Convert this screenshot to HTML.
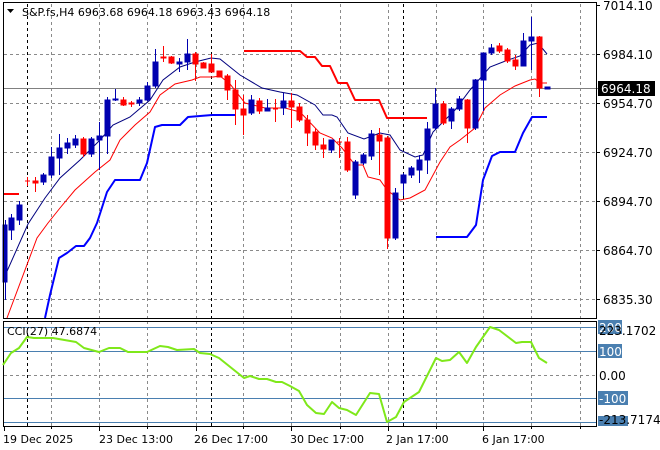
<!DOCTYPE html>
<html><head><meta charset="utf-8"><style>
html,body{margin:0;padding:0;background:#fff;width:660px;height:450px;overflow:hidden}
svg{display:block}
text{font-family:"DejaVu Sans","Liberation Sans",sans-serif;font-size:11px;fill:#000}
text.ax{font-size:12px}
</style></head><body>
<svg width="660" height="450" viewBox="0 0 660 450" xmlns="http://www.w3.org/2000/svg">
<rect width="660" height="450" fill="#fff"/>
<g stroke="#8a8a8a" stroke-width="1" stroke-dasharray="3,3" fill="none">
<path d="M4 54.5H596M4 103.5H596M4 152.5H596M4 201.5H596M4 250.5H596M4 299.5H596"/>
<path d="M51.5 4V318M99.5 4V318M147.5 4V318M196.5 4V318M243.5 4V318M291.5 4V318M340.5 4V318M388.5 4V318M436.5 4V318M483.5 4V318M531.5 4V318M580.5 4V318"/>
<path d="M51.5 321V426M99.5 321V426M147.5 321V426M196.5 321V426M243.5 321V426M291.5 321V426M340.5 321V426M388.5 321V426M436.5 321V426M483.5 321V426M531.5 321V426M580.5 321V426M4 375.5H596"/>
</g>
<g stroke="#000" stroke-width="1" stroke-dasharray="3,3" fill="none">
<path d="M27.5 4V318M211.5 4V318M403.5 4V318M27.5 321V426M211.5 321V426M403.5 321V426"/>
</g>
<path d="M4 88.5H598" stroke="#808080" stroke-width="1"/>
<g fill="none" stroke-width="2" stroke-linejoin="round">
<path d="M4 194H19" stroke="#ff0000"/>
<path d="M244 51H300L307 57H315L322 66H330L338 83H347L355 100H379L387 118H427" stroke="#ff0000"/>
<path d="M45 318L50 295L59 258L67 253L76 246H84L90 238L97 223L107 192L115 180H140L147 163L155 127L162 125H180L188 117L212 115H235" stroke="#0000ff"/>
<path d="M436 237H467L476 225L483 180L492 156L500 152H515L523 133L532 117H547" stroke="#0000ff"/>
</g>
<polyline fill="none" stroke="#00007f" stroke-width="1" points="4,278 28,224 45,198 60,178 80,160 100,140 113,125 130,117 150,100 163,80 180,67 195,62 211,58 220,59 240,75 262,88 280,92 297,95 315,105 323,115 332,115 337,117 348,133 364,139 380,133 390,135 400,150 415,157 423,155 433,132 455,110 470,90 490,67 508,60 520,56 530,45 538,43 547,54"/>
<polyline fill="none" stroke="#ff0000" stroke-width="1" points="7,318 37,238 48,223 60,208 75,190 95,172 110,160 120,140 135,125 150,112 160,95 175,84 192,80 200,77 213,77 220,76 230,84 245,103 265,108 285,108 300,112 320,133 332,138 342,148 355,165 363,165 368,177 380,180 387,190 400,200 410,198 425,190 440,162 450,147 460,140 475,128 485,108 500,95 515,86 530,80 535,79 540,83 547,83"/>
<g stroke-width="1">
<g fill="#0000b0" stroke="#0000b0">
<path d="M5.5 220V300"/><rect x="3" y="225" width="4" height="57"/>
<path d="M11.5 214V240"/><rect x="9" y="218" width="5" height="12"/>
<path d="M19.5 201V225"/><rect x="17" y="205" width="5" height="15"/>
<path d="M43.5 173V185"/><rect x="41" y="175" width="5" height="7"/>
<path d="M51.5 147V178"/><rect x="49" y="157" width="5" height="18"/>
<path d="M59.5 134V175"/><rect x="57" y="148" width="5" height="10"/>
<path d="M67.5 138V154"/><rect x="65" y="143" width="5" height="5"/>
<path d="M75.5 135V148"/><rect x="73" y="139" width="5" height="6"/>
<path d="M91.5 137V157"/><rect x="89" y="139" width="5" height="15"/>
<path d="M99.5 122V170"/><rect x="97" y="136" width="5" height="4"/>
<path d="M107.5 97V154"/><rect x="105" y="100" width="5" height="36"/>
<path d="M115.5 89V101"/><rect x="113" y="99" width="5" height="1"/>
<path d="M139.5 97V106"/><rect x="137" y="100" width="5" height="3"/>
<path d="M147.5 82V101"/><rect x="145" y="86" width="5" height="14"/>
<path d="M155.5 49V88"/><rect x="153" y="62" width="5" height="24"/>
<path d="M179.5 58V72"/><rect x="177" y="62" width="5" height="2"/>
<path d="M187.5 39V70"/><rect x="185" y="54" width="5" height="8"/>
<path d="M251.5 95V115"/><rect x="249" y="100" width="5" height="13"/>
<path d="M267.5 99V111"/><rect x="265" y="108" width="5" height="3"/>
<path d="M283.5 93V115"/><rect x="281" y="101" width="5" height="7"/>
<path d="M331.5 140V153"/><rect x="329" y="140" width="5" height="10"/>
<path d="M355.5 160V199"/><rect x="353" y="162" width="5" height="33"/>
<path d="M363.5 153V165"/><rect x="361" y="155" width="5" height="8"/>
<path d="M371.5 130V160"/><rect x="369" y="134" width="5" height="22"/>
<path d="M395.5 188V240"/><rect x="393" y="193" width="5" height="45"/>
<path d="M403.5 173V196"/><rect x="401" y="175" width="5" height="8"/>
<path d="M411.5 166V178"/><rect x="409" y="168" width="5" height="7"/>
<path d="M419.5 155V183"/><rect x="417" y="160" width="5" height="10"/>
<path d="M427.5 122V174"/><rect x="425" y="129" width="5" height="31"/>
<path d="M435.5 88V130"/><rect x="433" y="104" width="5" height="24"/>
<path d="M451.5 107V129"/><rect x="449" y="109" width="5" height="12"/>
<path d="M459.5 96V111"/><rect x="457" y="99" width="5" height="10"/>
<path d="M475.5 79V130"/><rect x="473" y="80" width="5" height="48"/>
<path d="M483.5 53V111"/><rect x="481" y="53" width="5" height="27"/>
<path d="M491.5 44V55"/><rect x="489" y="48" width="5" height="5"/>
<path d="M523.5 33V66"/><rect x="521" y="41" width="5" height="25"/>
<path d="M531.5 17V70"/><rect x="529" y="37" width="5" height="4"/>
<rect x="545" y="87" width="5" height="2"/>
</g>
<g fill="#ff0000" stroke="#ff0000">
<path d="M27.5 177V186M25 181H30"/>
<path d="M35.5 177V192"/><rect x="33" y="181" width="5" height="2"/>
<path d="M83.5 137V157"/><rect x="81" y="139" width="5" height="15"/>
<path d="M123.5 97V106"/><rect x="121" y="100" width="5" height="5"/>
<path d="M131.5 101V107"/><rect x="129" y="103" width="5" height="1"/>
<path d="M163.5 46V62"/><rect x="161" y="57" width="5" height="1"/>
<path d="M171.5 56V64"/><rect x="169" y="57" width="5" height="6"/>
<path d="M195.5 52V81"/><rect x="193" y="54" width="5" height="10"/>
<path d="M203.5 62V68"/><rect x="201" y="63" width="5" height="5"/>
<path d="M211.5 54V72"/><rect x="209" y="64" width="5" height="8"/>
<rect x="217" y="71" width="5" height="6"/>
<path d="M227.5 74V100"/><rect x="225" y="76" width="5" height="14"/>
<path d="M235.5 80V125"/><rect x="233" y="90" width="5" height="19"/>
<path d="M243.5 95V135"/><rect x="241" y="109" width="5" height="6"/>
<path d="M259.5 98V114"/><rect x="257" y="101" width="5" height="10"/>
<path d="M275.5 99V122M273 109H278"/>
<path d="M291.5 93V128"/><rect x="289" y="101" width="5" height="6"/>
<path d="M299.5 103V122"/><rect x="297" y="107" width="5" height="13"/>
<path d="M307.5 115V146"/><rect x="305" y="120" width="5" height="13"/>
<path d="M315.5 128V150"/><rect x="313" y="132" width="5" height="13"/>
<path d="M323.5 138V158"/><rect x="321" y="145" width="5" height="4"/>
<path d="M339.5 138V158M337 142H342"/>
<path d="M347.5 137V172"/><rect x="345" y="142" width="5" height="28"/>
<path d="M379.5 128V175"/><rect x="377" y="135" width="5" height="6"/>
<path d="M387.5 136V249"/><rect x="385" y="138" width="5" height="100"/>
<path d="M443.5 101V125"/><rect x="441" y="104" width="5" height="19"/>
<path d="M467.5 99V143"/><rect x="465" y="100" width="5" height="28"/>
<path d="M499.5 43V53"/><rect x="497" y="46" width="5" height="5"/>
<path d="M507.5 48V63"/><rect x="505" y="50" width="5" height="11"/>
<path d="M515.5 55V70"/><rect x="513" y="60" width="5" height="6"/>
<path d="M539.5 36V97"/><rect x="537" y="37" width="5" height="51"/>
</g>
</g>
<rect x="3.5" y="2.5" width="593" height="316" fill="none" stroke="#000"/>
<rect x="3.5" y="321.5" width="593" height="105" fill="none" stroke="#000"/>
<g stroke="#4a7fb0" stroke-width="1">
<path d="M4 327.5H596M4 351.5H596M4 398.5H596M4 422.5H596"/>
</g>
<polyline fill="none" stroke="#7fe81a" stroke-width="2" stroke-linejoin="round" points="3,365 11,353 19,348 27,337 34,338 53,338 76,342 84,348 99,352 109,348 120,348 128,352 147,352 160,346 168,347 177,350 194,349 200,353 210,354 219,358 244,378 250,376 259,379 267,379 276,382 282,382 290,386 299,391 307,405 316,413 324,414 332,402 339,408 347,410 356,415 370,393 379,394 387,422 396,417 404,402 419,392 436,358 442,361 450,360 459,352 467,363 476,347 490,327 499,330 516,343 522,342 531,342 539,358 547,363"/>
<path d="M7 9H14L10.5 13Z" fill="#000"/>
<text x="22" y="16">S&amp;P.fs,H4  6963.68 6964.18 6963.43 6964.18</text>
<text x="7" y="335">CCI(27) 47.6874</text>
<g stroke="#000"><path d="M596 5.5H600M596 54.5H600M596 103.5H600M596 152.5H600M596 201.5H600M596 250.5H600M596 299.5H600"/></g>
<text class="ax" x="603" y="10">7014.10</text>
<text class="ax" x="603" y="59">6984.10</text>
<text class="ax" x="603" y="108">6954.70</text>
<text class="ax" x="603" y="157">6924.70</text>
<text class="ax" x="603" y="206">6894.70</text>
<text class="ax" x="603" y="255">6864.70</text>
<text class="ax" x="603" y="304">6835.30</text>
<rect x="598" y="81" width="57" height="15" fill="#000"/>
<text class="ax" x="601" y="93" style="fill:#fff">6964.18</text>
<g fill="#4a7fb0">
<rect x="598" y="320" width="24" height="14"/>
<rect x="598" y="344" width="24" height="14"/>
<rect x="598" y="391" width="30" height="14"/>
<rect x="598" y="416" width="30" height="10"/>
</g>
<text class="ax" x="599" y="332" style="fill:#fff">200</text>
<text class="ax" x="599" y="335">223.1702</text>
<text class="ax" x="599" y="356" style="fill:#fff">100</text>
<text class="ax" x="599" y="380">0.00</text>
<text class="ax" x="599" y="403" style="fill:#fff">-100</text>
<text class="ax" x="599" y="424">-213.7174</text>
<g stroke="#000"><path d="M4.5 426V431M99.5 426V431M196.5 426V431M291.5 426V431M388.5 426V431M483.5 426V431M51.5 426V429M147.5 426V429M243.5 426V429M340.5 426V429M436.5 426V429M531.5 426V429M580.5 426V429"/></g>
<text x="3" y="443">19 Dec 2025</text>
<text x="99" y="443">23 Dec 13:00</text>
<text x="194" y="443">26 Dec 17:00</text>
<text x="290" y="443">30 Dec 17:00</text>
<text x="386" y="443">2 Jan 17:00</text>
<text x="482" y="443">6 Jan 17:00</text>
</svg>
</body></html>
